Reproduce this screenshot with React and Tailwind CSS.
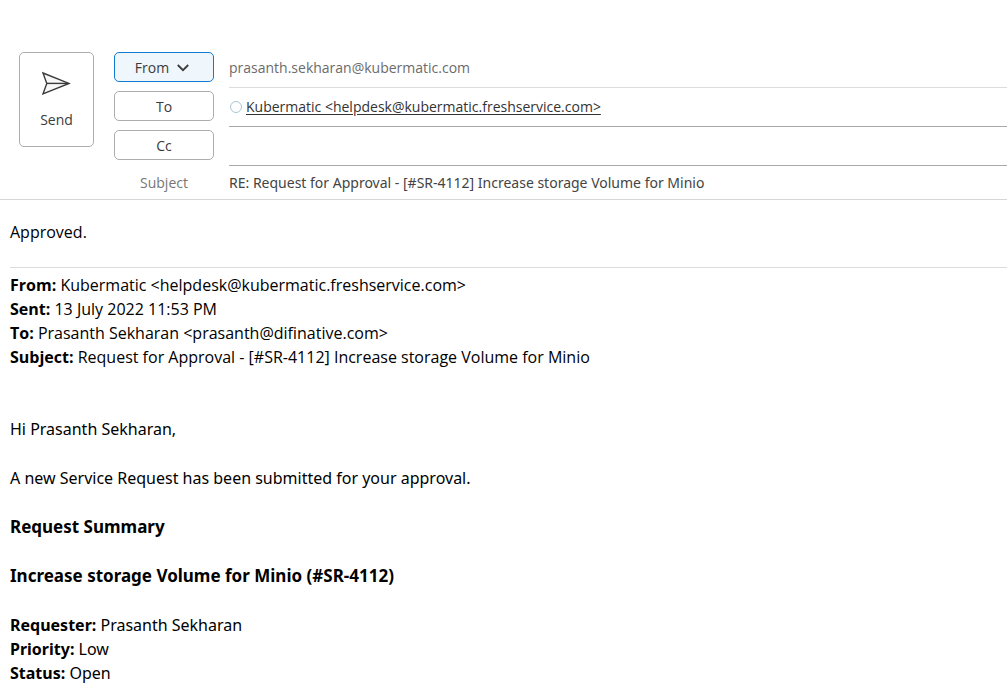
import React from "react";

const fieldButton =
  "flex h-[30px] w-full items-center justify-center gap-2 rounded-[5px] border border-[#adadad] bg-white pt-[2px] text-[#3b3b3b]";

const messageHeaders = [
  ["From:", "Kubermatic <helpdesk@kubermatic.freshservice.com>"],
  ["Sent:", "13 July 2022 11:53 PM"],
  ["To:", "Prasanth Sekharan <prasanth@difinative.com>"],
  ["Subject:", "Request for Approval - [#SR-4112] Increase storage Volume for Minio"],
];

const requestDetails = [
  ["Requester:", "Prasanth Sekharan"],
  ["Priority:", "Low"],
  ["Status:", "Open"],
];

function SendIcon() {
  return (
    <svg width="30" height="26" viewBox="0 0 30 26" fill="none" stroke="#3b3b3b" strokeWidth="1.4" aria-hidden="true">
      <path d="M1 2 27 12.4 1 22.8 4.8 12.4Z" fill="#f7f7f7" strokeLinejoin="miter" />
      <path d="M4.8 12.4H26" />
    </svg>
  );
}

function ChevronIcon() {
  return (
    <svg width="12" height="8" viewBox="0 0 12 8" fill="none" stroke="#3b3b3b" strokeWidth="1.8" aria-hidden="true">
      <path d="M0.8 1 6 6.2 11.2 1" />
    </svg>
  );
}

function FieldRow({ action, border, children }) {
  return (
    <div className="flex h-[39px] gap-[15px]">
      <div className="w-[100px] shrink-0 pt-[3px]">{action}</div>
      <div className={"flex min-w-0 flex-1 items-center border-b " + border}>{children}</div>
    </div>
  );
}

function ComposeHeader() {
  return (
    <header className="flex gap-5 border-b border-[#d6d6d6] pt-[49px] pl-[19px] font-['Open_Sans','Noto_Sans',sans-serif] text-[14px] leading-5">
      <button
        type="button"
        className="mt-[3px] flex h-[95px] w-[75px] shrink-0 flex-col items-center justify-center gap-[13px] rounded-[5px] border border-[#adadad] bg-white pt-px text-[#3b3b3b]"
      >
        <SendIcon />
        <span>Send</span>
      </button>
      <div className="min-w-0 flex-1">
        <FieldRow
          border="border-[#dcdcdc]"
          action={
            <button type="button" className="flex h-[30px] w-full items-center justify-center gap-2 rounded-[5px] border border-[#0f7bd4] bg-[#eff6fc] pt-[2px] pr-1 text-[#3b3b3b]">
              From <ChevronIcon />
            </button>
          }
        >
          <span className="truncate text-[#6b6b6b]">prasanth.sekharan@kubermatic.com</span>
        </FieldRow>
        <FieldRow border="border-[#a8a8a8]" action={<button type="button" className={fieldButton}>To</button>}>
          <span className="ml-px mr-1 size-3 shrink-0 rounded-full border border-[#a9c6d2]" />
          <a href="mailto:helpdesk@kubermatic.freshservice.com" className="truncate text-[#333333] underline underline-offset-2">
            Kubermatic &lt;helpdesk@kubermatic.freshservice.com&gt;
          </a>
        </FieldRow>
        <FieldRow border="border-[#a8a8a8]" action={<button type="button" className={fieldButton}>Cc</button>}>
          <input type="text" aria-label="Cc" className="w-full bg-transparent text-[#333333] outline-none" />
        </FieldRow>
        <div className="flex h-[33px] items-center gap-[15px]">
          <label htmlFor="subject" className="w-[100px] shrink-0 text-center text-[#767676]">
            Subject
          </label>
          <input
            id="subject"
            type="text"
            defaultValue="RE: Request for Approval - [#SR-4112] Increase storage Volume for Minio"
            className="min-w-0 flex-1 bg-transparent font-['Noto_Sans',sans-serif] text-[#444444] outline-none"
          />
        </div>
      </div>
    </header>
  );
}

export default function App() {
  return (
    <div className="min-h-screen bg-white text-black">
      <ComposeHeader />
      <main className="pt-5 pb-1 pl-[10px]">
        <section className="font-['Open_Sans','Noto_Sans',sans-serif] text-[16px] leading-6">
          <p>Approved.</p>
          <div className="mt-[23px] border-t border-[#dcdcdc] pt-[5px]">
            {messageHeaders.map(([name, value]) => (
              <p key={name}>
                <b>{name}</b> {value}
              </p>
            ))}
          </div>
        </section>
        <section className="mt-12 flex flex-col gap-[25px] font-['Noto_Sans',sans-serif] text-[16px] leading-6">
          <p>Hi Prasanth Sekharan,</p>
          <p>A new Service Request has been submitted for your approval.</p>
          <h2 className="text-[17px] font-bold">Request Summary</h2>
          <h3 className="text-[17px] font-bold">Increase storage Volume for Minio (#SR-4112)</h3>
          <div>
            {requestDetails.map(([name, value]) => (
              <p key={name}>
                <b>{name}</b> {value}
              </p>
            ))}
          </div>
        </section>
      </main>
    </div>
  );
}
